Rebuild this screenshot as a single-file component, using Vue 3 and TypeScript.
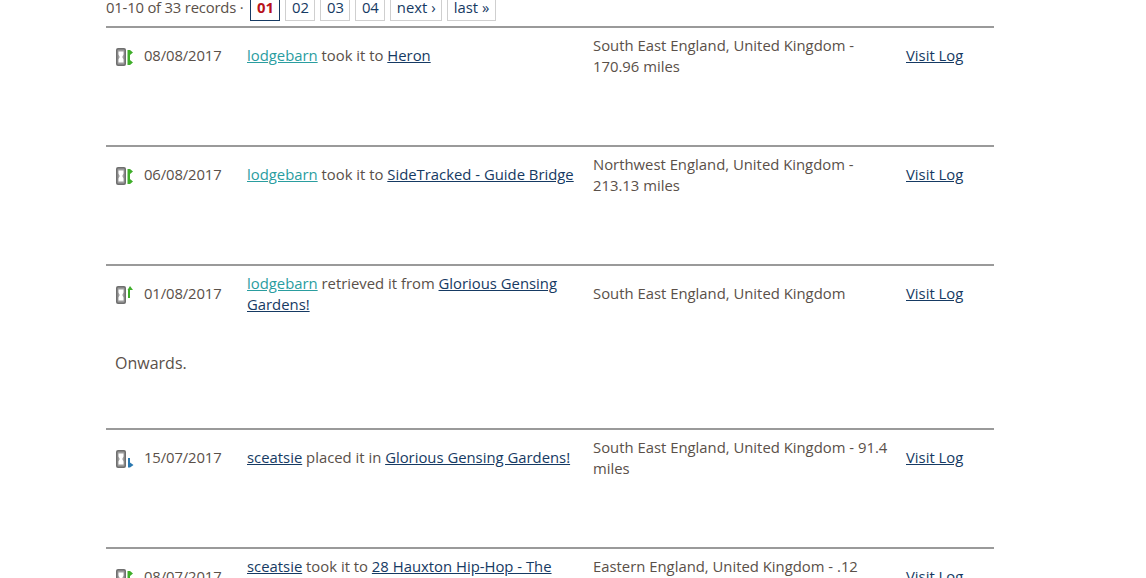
<script setup lang="ts">
type LogKind = 'took' | 'retrieved' | 'placed'

interface LogRow {
  kind: LogKind
  date: string
  user: string
  userVisited: boolean
  verb: string
  cache: string
  place: string
  note?: string
}

const pages = ['02', '03', '04', 'next ›', 'last »']

const rows: LogRow[] = [
  { kind: 'took', date: '08/08/2017', user: 'lodgebarn', userVisited: true, verb: 'took it to', cache: 'Heron', place: 'South East England, United Kingdom - 170.96 miles' },
  { kind: 'took', date: '06/08/2017', user: 'lodgebarn', userVisited: true, verb: 'took it to', cache: 'SideTracked - Guide Bridge', place: 'Northwest England, United Kingdom - 213.13 miles' },
  { kind: 'retrieved', date: '01/08/2017', user: 'lodgebarn', userVisited: true, verb: 'retrieved it from', cache: 'Glorious Gensing Gardens!', place: 'South East England, United Kingdom', note: 'Onwards.' },
  { kind: 'placed', date: '15/07/2017', user: 'sceatsie', userVisited: false, verb: 'placed it in', cache: 'Glorious Gensing Gardens!', place: 'South East England, United Kingdom - 91.4 miles' },
  { kind: 'took', date: '08/07/2017', user: 'sceatsie', userVisited: false, verb: 'took it to', cache: '28 Hauxton Hip-Hop - The Musical', place: 'Eastern England, United Kingdom - .12 miles' },
]
</script>

<template>
  <div class="page">
    <div class="pager">
      <span class="count">01-10 of 33 records ·</span>
      <span class="pg current">01</span>
      <a v-for="p in pages" :key="p" class="pg" href="#">{{ p }}</a>
    </div>

    <div v-for="row in rows" :key="row.date" class="log">
      <div class="cols">
        <div class="when">
          <svg class="icon" width="19" height="18" viewBox="0 0 19 18">
            <rect x="1" y="0" width="10" height="18" rx="2" fill="#6f6f6f" />
            <rect x="2.500" y="1.500" width="7" height="15" rx="1" fill="#9c9c9c" />
            <path d="M3.500 3.500h5v3l-1.200 2.500 1.200 2.500v3h-5v-3l1.200-2.500-1.200-2.500z" fill="#fff" />
            <path v-if="row.kind === 'took'" d="M12.500 2h2.500l3 2.500-3 2.500v5l3 2.500-3 2.500h-2.500z" fill="#3fae2a" />
            <path v-else-if="row.kind === 'retrieved'" d="M13 12V4h-.5L15 0l3 4h-3v8z" fill="#3fae2a" />
            <path v-else d="M13 8h2v4.500l3.500 2.500-3.500 2.500h-2z" fill="#2a78b0" />
          </svg>
          <span class="date">{{ row.date }}</span>
        </div>
        <div class="what">
          <a href="#" :class="{ visited: row.userVisited }">{{ row.user }}</a>
          {{ row.verb }}
          <a href="#">{{ row.cache }}</a>
        </div>
        <div class="where">{{ row.place }}</div>
        <div><a href="#">Visit Log</a></div>
      </div>
      <p v-if="row.note" class="note">{{ row.note }}</p>
    </div>
  </div>
</template>

<style scoped>
.page {
  width: 888px;
  margin: -5px 0 0 106px;
  font-family: "Open Sans", sans-serif;
  font-size: 14.85px;
  line-height: 21px;
  color: #5a5049;
}
a { color: #163a63; }
a.visited { color: #2a9d9f; }
.pager {
  display: flex;
  align-items: flex-start;
  height: 31px;
}
.count { margin-right: 7px; line-height: 24px; letter-spacing: -0.2px; }
.pg {
  display: block;
  box-sizing: border-box;
  height: 26px;
  line-height: 22px;
  padding: 0 5.5px;
  margin-right: 5px;
  border: 1px solid #cfcfcf;
  text-decoration: none;
  color: #163a63;
}
.pg.current {
  border-color: #163a63;
  color: #b8121b;
  font-weight: 700;
}
.log {
  border-top: 2px solid #9a9a9a;
  min-height: 117px;
}
.cols {
  display: grid;
  grid-template-columns: 141px 346px 313px 1fr;
  align-items: center;
  padding-top: 6.6px;
}
.when {
  display: flex;
  align-items: center;
  padding-left: 9px;
}
.icon { margin: 3px 10px 0 0; flex: none; }
.date { letter-spacing: -0.12px; }
.what { padding-right: 10px; }
.where { padding-right: 10px; }
.note { margin: 38px 0 0 9px; padding-bottom: 54.4px; font-size: 16px; }
</style>

<style>
body { overflow: hidden; }
</style>
